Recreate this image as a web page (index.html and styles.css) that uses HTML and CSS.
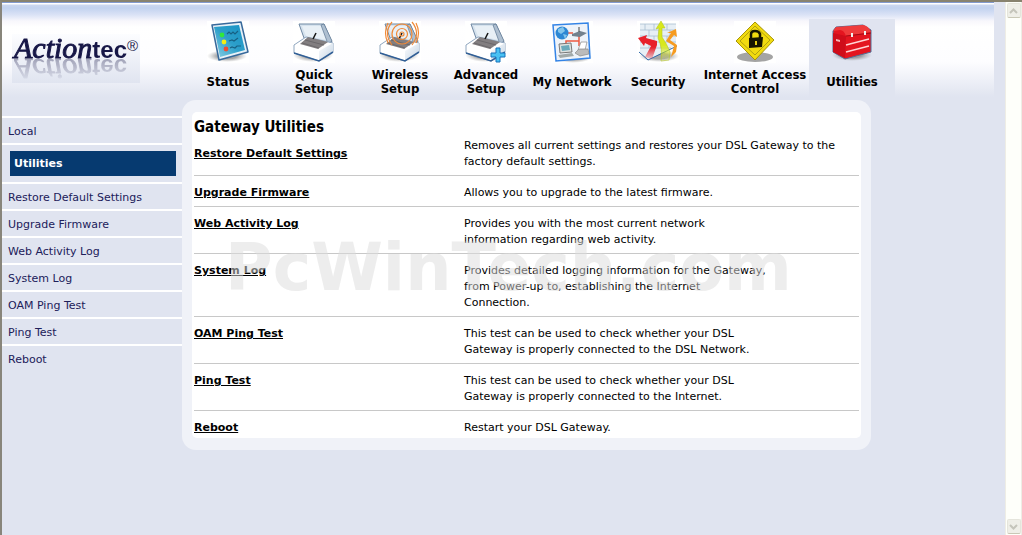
FILE: index.html
```html
<!DOCTYPE html>
<html lang="en">
<head>
  <meta charset="UTF-8" />
  <meta name="viewport" content="width=device-width, initial-scale=1.0" />
  <title>Gateway Utilities</title>
  <link rel="stylesheet" href="styles.css">
</head>
<body>
  <!-- shared shapes for the setup icons -->
  <svg class="defs" width="0" height="0" aria-hidden="true">
    <defs>
      <linearGradient id="side" x1="0" y1="0" x2="1" y2="1">
        <stop offset="0" stop-color="#ffffff"/>
        <stop offset="1" stop-color="#c3d3e3"/>
      </linearGradient>
      <linearGradient id="screen" x1="1" y1="0" x2="0" y2="1">
        <stop offset="0" stop-color="#1793c4"/>
        <stop offset=".5" stop-color="#2d9fca"/>
        <stop offset="1" stop-color="#8bd0e4"/>
      </linearGradient>
      <radialGradient id="shadow">
        <stop offset=".5" stop-color="#777" stop-opacity=".65"/>
        <stop offset="1" stop-color="#999" stop-opacity="0"/>
      </radialGradient>
      <linearGradient id="fade" x1="0" y1="0" x2="0" y2="1">
        <stop offset=".6" stop-color="#d8e81c"/>
        <stop offset="1" stop-color="#d8e81c" stop-opacity="0"/>
      </linearGradient>
      <linearGradient id="fade-red" x1="0" y1="0" x2="0" y2="1">
        <stop offset=".5" stop-color="#e8202a"/>
        <stop offset="1" stop-color="#e8202a" stop-opacity=".2"/>
      </linearGradient>
      <g id="box">
        <ellipse cx="20" cy="34" rx="20" ry="7" fill="url(#shadow)"/>
        <path d="M6 3L31 3L39 21L33 23L11 17Z" fill="#d5e2ed" stroke="#6f88a3" stroke-width="1"/>
        <path d="M9 5L28 5L34 19L13 15Z" fill="#e8f0f6"/>
        <path d="M28 4L31 3L39 20L35 23Z" fill="#aebfd0" stroke="#5e7894" stroke-width=".7"/>
        <path d="M1 24L13 16L40 22L40 31L26 40L1 32Z" fill="#fff" stroke="#8fa6bf" stroke-width="1"/>
        <path d="M7 23L15 16L35 21L25 28Z" fill="#827e80"/>
        <path d="M12 19L31 24M9 22L26 27" stroke="#6b686b" stroke-width="1"/>
        <path d="M26 30L40 22L40 31L26 40Z" fill="url(#side)"/>
        <path d="M1 32L26 40L40 31" fill="none" stroke="#315f96" stroke-width="1.5"/>
        <path d="M20 18L23 12" stroke="#161616" stroke-width="1.5"/>
      </g>
    </defs>
  </svg>

  <div class="window">
    <div class="page">
      <header class="header">
        <a class="logo" href="#" aria-label="Actiontec">
          <span class="logo-text"><span class="logo-script">Action</span><span class="logo-tec">tec</span></span><span class="logo-mark">®</span>
        </a>
        <nav class="nav">
          <a class="nav-item" href="#">
            <svg class="icon" viewBox="0 0 42 42">
              <rect width="42" height="42" fill="#fff"/>
              <ellipse cx="20" cy="35" rx="20" ry="6" fill="url(#shadow)"/>
              <path d="M5 4L34 1L41 31L12 39Z" fill="#e7f1f7" stroke="#37699b" stroke-width="1.5" stroke-linejoin="round"/>
              <path d="M7 6L32 4L38 29L13 36Z" fill="url(#screen)"/>
              <circle cx="15" cy="14" r="2.4" fill="#31e83a"/>
              <circle cx="17" cy="21" r="2.4" fill="#f4ed13"/>
              <circle cx="19" cy="28" r="2.4" fill="#ef4c32"/>
              <path d="M20 13l2-2 2 2 2-2 2 2 3-3M22 20l3-1 2 1 4-3M23 27l2-1 3 1 2-2 4 0" fill="none" stroke="#176184" stroke-width="1.2"/>
            </svg>
            <span class="nav-label">Status</span>
          </a>
          <a class="nav-item" href="#">
            <svg class="icon" viewBox="0 0 42 42">
              <rect width="42" height="42" fill="#fff"/>
              <use href="#box"/>
            </svg>
            <span class="nav-label">Quick<br>Setup</span>
          </a>
          <a class="nav-item" href="#">
            <svg class="icon" viewBox="0 0 42 42">
              <rect width="42" height="42" fill="#fff"/>
              <use href="#box"/>
              <g fill="none" stroke="#f08a38" stroke-width="1.2">
                <circle cx="23" cy="13" r="2"/>
                <circle cx="23" cy="13" r="5.5"/>
                <circle cx="23" cy="13" r="10"/>
                <path d="M13 1Q4 12 13 24M33 1Q42 12 33 24M9 2Q4 12 9 22M37 2Q42 12 37 22"/>
              </g>
            </svg>
            <span class="nav-label">Wireless<br>Setup</span>
          </a>
          <a class="nav-item" href="#">
            <svg class="icon" viewBox="0 0 42 42">
              <rect width="42" height="42" fill="#fff"/>
              <use href="#box"/>
              <path d="M31 27h4v5h5v4h-5v5h-4v-5h-5v-4h5z" fill="#48c1f3" stroke="#1672bc" stroke-width="1"/>
            </svg>
            <span class="nav-label">Advanced<br>Setup</span>
          </a>
          <a class="nav-item" href="#">
            <svg class="icon" viewBox="0 0 42 42">
              <rect width="42" height="42" fill="#fff"/>
              <ellipse cx="22" cy="36" rx="19" ry="6" fill="url(#shadow)"/>
              <path d="M2 4L37 2L39 37L5 40Z" fill="#eef3f9" stroke="#3484e6" stroke-width="1.5"/>
              <path d="M15 12H22M28 14V20H15V24M28 18V25" fill="none" stroke="#ee5a42" stroke-width="1.5"/>
              <circle cx="11" cy="12" r="6.5" fill="#2c87d4"/>
              <path d="M7 8l5-2 2 4-4 3-3-2zM12 13l4 1-2 4z" fill="#83c5ec"/>
              <path d="M21 13L29 10L36 12L29 16L21 15Z" fill="#73818d"/>
              <path d="M28 11V6" stroke="#444" stroke-width="1"/>
              <path d="M8 23L20 22L21 31L9 32Z" fill="#dde1df" stroke="#777" stroke-width="1"/>
              <path d="M10 25L18 24L19 29L11 30Z" fill="#6caabb"/>
              <path d="M7 34L21 32L23 35L9 37Z" fill="#a1a9a9"/>
              <path d="M27 29L30 21L36 21L34 29Z" fill="#fff" stroke="#888" stroke-width=".7"/>
              <path d="M24 32L28 28L37 28L38 33L29 35Z" fill="#bbb" stroke="#888" stroke-width=".7"/>
            </svg>
            <span class="nav-label">My Network</span>
          </a>
          <a class="nav-item" href="#">
            <svg class="icon" viewBox="0 0 42 42">
              <rect width="42" height="42" fill="#fff"/>
              <ellipse cx="22" cy="35" rx="20" ry="6" fill="url(#shadow)"/>
              <path d="M3 3L39 3L39 24L12 39L3 31Z" fill="#e7eff5"/>
              <path d="M3 3H39M3 9H39M3 15H39M3 21H39M3 27H34M8 3V9M17 3V9M30 3V9M12 9V15M22 9V15M33 9V15M8 15V21M17 15V21M30 15V21M12 21V27M24 21V27" fill="none" stroke="#a9bfd0" stroke-width=".8"/>
              <path d="M2 31L11 39L40 25" fill="none" stroke="#2d68aa" stroke-width="1"/>
              <path d="M8 36L14 25L8 22L7 25L1 17L10 14L9 17L20 20L20 24L15 38Z" fill="url(#fade-red)"/>
              <path d="M34 36L37 25L29 20L34 12L30 12L39 8L40 16L37 14L33 19L40 24L39 31Z" fill="#f69b20"/>
              <path d="M24 40Q26 28 21 17L22 7L19 8L24 0L28 7L25 7L25 16Q30 23 33 31L32 39Z" fill="url(#fade)" stroke="#b8cb20" stroke-width=".6"/>
            </svg>
            <span class="nav-label">Security</span>
          </a>
          <a class="nav-item nav-item-wide" href="#">
            <svg class="icon" viewBox="0 0 42 42">
              <rect width="42" height="42" fill="#fff"/>
              <ellipse cx="21" cy="36" rx="18" ry="5" fill="#a4a4a4"/>
              <path d="M21 1L40 19L21 39L2 20Z" fill="#f1db10" stroke="#a69509" stroke-width="1"/>
              <path d="M21 5L36 19L21 34L6 20Z" fill="none" stroke="#b1a110" stroke-width="1"/>
              <path d="M17 17V13Q17 10 21 10T26 13V17" fill="none" stroke="#171600" stroke-width="2.5"/>
              <path d="M15 17L29 16L28 26L15 27Z" fill="#171600"/>
              <path d="M21 20h2v4h-2z" fill="#e4ce12"/>
            </svg>
            <span class="nav-label">Internet Access<br>Control</span>
          </a>
          <a class="nav-item nav-item-active" href="#">
            <svg class="icon" viewBox="0 0 42 42">
              <ellipse cx="21" cy="34" rx="20" ry="6" fill="url(#shadow)"/>
              <path d="M2 10L5 6L32 4L40 9L40 31L14 38L2 31Z" fill="#e4151f" stroke="#536f96" stroke-width="1"/>
              <path d="M2 10L5 6L32 4Q38 5 40 11L15 15Q13 9 9 9Z" fill="#ef3b3b"/>
              <path d="M2 12L15 15L14 37L2 31Z" fill="#cf0d1a"/>
              <path d="M15 15L40 12" stroke="#a60c14" stroke-width="1"/>
              <path d="M15 24L38 18M15 31L38 25" stroke="#ffd5d5" stroke-width="1.4"/>
              <path d="M20 12h2v4h-2zM33 10h2v4h-2z" fill="#eef2ee"/>
              <path d="M5 18l4 1v2l-4-1z" fill="#f6b8b8"/>
            </svg>
            <span class="nav-label">Utilities</span>
          </a>
        </nav>
      </header>

      <div class="columns">
        <nav class="sidebar">
          <a class="side-link" href="#">Local</a>
          <div class="side-current"><a class="side-current-link" href="#">Utilities</a></div>
          <a class="side-link" href="#">Restore Default Settings</a>
          <a class="side-link" href="#">Upgrade Firmware</a>
          <a class="side-link" href="#">Web Activity Log</a>
          <a class="side-link" href="#">System Log</a>
          <a class="side-link" href="#">OAM Ping Test</a>
          <a class="side-link" href="#">Ping Test</a>
          <a class="side-link" href="#">Reboot</a>
        </nav>

        <main class="panel">
          <div class="panel-body">
            <h1 class="title">Gateway Utilities</h1>
            <table class="tools">
              <tr class="first">
                <th scope="row"><a href="#">Restore Default Settings</a></th>
                <td>Removes all current settings and restores your DSL Gateway to the<br>factory default settings.</td>
              </tr>
              <tr>
                <th scope="row"><a href="#">Upgrade Firmware</a></th>
                <td>Allows you to upgrade to the latest firmware.</td>
              </tr>
              <tr>
                <th scope="row"><a href="#">Web Activity Log</a></th>
                <td>Provides you with the most current network<br>information regarding web activity.</td>
              </tr>
              <tr>
                <th scope="row"><a href="#">System Log</a></th>
                <td>Provides detailed logging information for the Gateway,<br>from Power-up to, establishing the Internet<br>Connection.</td>
              </tr>
              <tr>
                <th scope="row"><a href="#">OAM Ping Test</a></th>
                <td>This test can be used to check whether your DSL<br>Gateway is properly connected to the DSL Network.</td>
              </tr>
              <tr>
                <th scope="row"><a href="#">Ping Test</a></th>
                <td>This test can be used to check whether your DSL<br>Gateway is properly connected to the Internet.</td>
              </tr>
              <tr>
                <th scope="row"><a href="#">Reboot</a></th>
                <td>Restart your DSL Gateway.</td>
              </tr>
            </table>
          </div>
          <div class="watermark">PcWinTech.com</div>
        </main>
      </div>
    </div>

    <div class="scrollbar">
      <button class="scroll-button" type="button" aria-label="Scroll up">
        <svg width="9" height="6" viewBox="0 0 9 6"><path d="M1 5L4.500 1.500L8 5" fill="none" stroke="#c5c5bb" stroke-width="2"/></svg>
      </button>
      <button class="scroll-button" type="button" aria-label="Scroll down">
        <svg width="9" height="6" viewBox="0 0 9 6"><path d="M1 1L4.500 4.500L8 1" fill="none" stroke="#c5c5bb" stroke-width="2"/></svg>
      </button>
    </div>
  </div>
</body>
</html>
```
FILE: styles.css
```css
* {
  box-sizing: border-box;
}

body {
  margin: 0;
  background: #e0e4f0;
  font-family: Verdana, "DejaVu Sans", sans-serif;
  font-size: 11px;
  line-height: 16px;
  color: #000;
}

a {
  color: inherit;
  text-decoration: none;
}

.defs {
  position: absolute;
}

.window {
  display: flex;
  min-height: 100vh;
  border-top: 2px solid #88836f;
  border-left: 2px solid #88857b;
}

.page {
  flex: 1;
  min-width: 0;
}

/* header */
.header {
  display: flex;
  align-items: flex-start;
  height: 95px;
  margin-right: 11px;
  background: linear-gradient(#829bd0 0, #829bd0 1px, #fff 1px, #fff 2px, #cbd7ef 3px, #c2d2ef 6px, #dbe3f6 13px, #f8f7fc 19px, #fff 25px, #fdfdff 60px, #e0e4f0 95px);
}

.logo {
  display: flex;
  width: 128px;
  height: 49px;
  margin: 32px 45px 0 10px;
  padding-left: 2px;
  color: #171747;
  background: linear-gradient(#fcfdff, #e0e4f0);
}

.logo-text {
  display: block;
  height: 27px;
  line-height: 27px;
  white-space: nowrap;
  -webkit-box-reflect: below -5px linear-gradient(transparent, rgba(0, 0, 0, 0.4));
}

.logo-script {
  font-family: "Liberation Serif", serif;
  font-size: 30px;
  font-style: italic;
  -webkit-text-stroke: 1px #171747;
}

.logo-tec {
  font-family: "Liberation Sans", Arial, sans-serif;
  font-size: 24px;
  font-weight: bold;
}

.logo-mark {
  font-family: "Liberation Sans", Arial, sans-serif;
  font-size: 15px;
  line-height: 24px;
}

.nav {
  display: flex;
  padding-top: 17px;
}

.nav-item {
  display: flex;
  flex-direction: column;
  align-items: center;
  width: 86px;
  height: 78px;
  padding-top: 2px;
}

.nav-item-wide {
  width: 108px;
}

.nav-item-active {
  background: #e0e4f0;
}

.icon {
  width: 42px;
  height: 42px;
}

.nav-label {
  display: flex;
  align-items: center;
  height: 28px;
  margin-top: 5px;
  font-family: Tahoma, "DejaVu Sans Condensed", "DejaVu Sans", sans-serif;
  font-size: 13px;
  font-weight: bold;
  line-height: 14px;
  text-align: center;
  white-space: nowrap;
}

/* left menu */
.columns {
  display: flex;
  align-items: flex-start;
  padding-top: 3px;
}

.sidebar {
  width: 180px;
  margin-top: 16px;
  color: #20205a;
}

.side-link {
  display: block;
  padding: 6px 6px 3px;
  border-top: 2px solid #fff;
}

.side-current {
  padding: 6px 6px 6px 8px;
  border-top: 2px solid #fff;
}

.side-current-link {
  display: block;
  padding: 5px 4px 4px;
  background: #063a70;
  color: #fff;
  font-weight: bold;
}

/* content */
.panel {
  position: relative;
  flex: 1;
  max-width: 689px;
  padding: 12px 10px;
  border-radius: 14px;
  background: #f0f2f8;
}

.panel-body {
  padding: 5px 2px 2px;
  border-radius: 5px;
  background: #fff;
}

.title {
  margin: 0;
  font-family: Tahoma, "DejaVu Sans Condensed", "DejaVu Sans", sans-serif;
  font-size: 15px;
  line-height: 21px;
}

.tools {
  width: 100%;
  border-collapse: separate;
  border-spacing: 0;
}

.tools th,
.tools td {
  padding: 9px 0 5px;
  border-bottom: 1px solid #c8c8c8;
  text-align: left;
  vertical-align: top;
}

.tools th {
  width: 270px;
}

.tools th a {
  text-decoration: underline;
}

.tools .first th,
.tools .first td {
  padding-top: 0;
  vertical-align: middle;
}

.tools tr:last-child th,
.tools tr:last-child td {
  padding-bottom: 0;
  border-bottom: 0;
}

.watermark {
  position: absolute;
  top: 136px;
  left: 43px;
  color: rgba(219, 219, 219, 0.5);
  font-size: 65px;
  font-weight: bold;
  line-height: 64px;
  pointer-events: none;
}

/* window scrollbar */
.scrollbar {
  display: flex;
  flex-direction: column;
  justify-content: space-between;
  align-items: center;
  width: 17px;
  padding: 1px 0;
  border-left: 1px solid #eeede5;
  border-right: 1px solid #eeede5;
  background: #fefffa;
}

.scroll-button {
  display: flex;
  align-items: center;
  justify-content: center;
  width: 14px;
  height: 15px;
  padding: 0;
  border: 1px solid #e5e5dc;
  border-bottom-color: #c9c8b6;
  border-radius: 2px;
  background: #efefe8;
}
```
